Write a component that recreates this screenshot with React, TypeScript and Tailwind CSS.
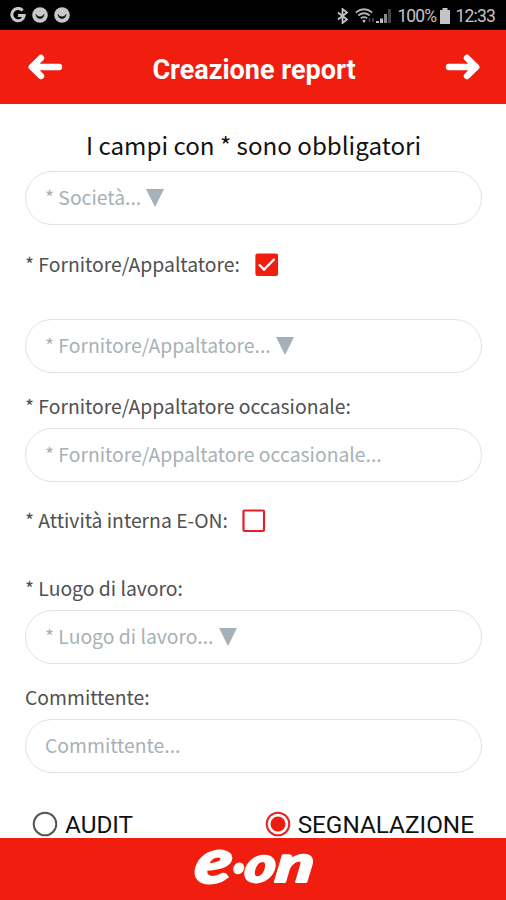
import type { ReactNode } from "react";

interface FieldProps {
  placeholder: string;
  isSelect?: boolean;
}

function Field({ placeholder, isSelect = false }: FieldProps) {
  return (
    <div className="flex h-[54px] w-full shrink-0 items-center rounded-full border-[1.5px] border-[#e2e2e4] bg-white pb-px pl-[19px] text-[19.35px] leading-none text-[#a7b1b6]">
      <span className="whitespace-pre">{placeholder}</span>
      {isSelect && (
        <svg className="ml-[5px] h-[18px] w-[18px]" viewBox="0 0 18 18">
          <path d="M0 0h18L9 18z" fill="#a5b0b8" />
        </svg>
      )}
    </div>
  );
}

function Label({ children }: { children: ReactNode }) {
  return (
    <span className="text-[19.35px] leading-6 whitespace-pre text-[#505050]">
      {children}
    </span>
  );
}

function Checkbox({ checked = false }: { checked?: boolean }) {
  return (
    <svg className="mt-px h-[24px] w-[24px]" viewBox="0 0 24 24">
      <rect
        x="1.5"
        y="1.5"
        width="20.5"
        height="20.5"
        rx="1"
        fill={checked ? "#f11d0e" : "#fff"}
        stroke={checked ? "#f11d0e" : "#e3202a"}
        strokeWidth="2.2"
      />
      {checked && (
        <path d="M4 11.5l5 5L19.500 6" fill="none" stroke="#fff" strokeWidth="2.4" />
      )}
    </svg>
  );
}

function Radio({ label, selected = false }: { label: string; selected?: boolean }) {
  return (
    <div className="flex items-center gap-[7px]">
      <svg className="h-[26px] w-[26px]" viewBox="0 0 26 26">
        <circle
          cx="13"
          cy="13"
          r="11.3"
          fill="none"
          stroke={selected ? "#e52222" : "#555"}
          strokeWidth="2"
        />
        {selected && <circle cx="13" cy="13" r="7.5" fill="#ee1c10" />}
      </svg>
      <span className="pt-[2px] font-[Roboto,sans-serif] text-[24.3px] leading-[24px] text-[#111]">
        {label}
      </span>
    </div>
  );
}

function Arrow({ flip = false }: { flip?: boolean }) {
  return (
    <svg
      className={flip ? "h-[28px] w-[36px] -scale-x-100" : "h-[28px] w-[36px]"}
      viewBox="0 0 36 28"
      fill="none"
      stroke="#fff"
      strokeWidth="6.4"
      strokeLinecap="round"
      strokeLinejoin="round"
    >
      <path d="M32 14H6M14 5L4.800 14l9.200 9" />
    </svg>
  );
}

function Smiley() {
  return (
    <svg className="h-4 w-4" viewBox="0 0 16 16">
      <circle cx="8" cy="8" r="7.8" fill="#c8c8c8" />
      <path d="M4 7.500q.5 4 4 4t4-4q-1.500 2.500-4 2.500t-4-2.500z" fill="#111" stroke="#111" strokeWidth=".8" />
    </svg>
  );
}

function StatusBar() {
  return (
    <div className="flex h-[30px] shrink-0 items-center justify-between bg-black pr-[11px] pl-[10px] font-[Roboto,sans-serif] text-[#c4c4c4]">
      <div className="flex items-center gap-[6px]">
        <svg className="h-4 w-4" viewBox="0 0 16 16" fill="none" stroke="#c8c8c8" strokeWidth="3">
          <path d="M12.700 3.500A6.200 6.200 0 1 0 14.200 8.500H8" />
        </svg>
        <Smiley />
        <Smiley />
      </div>
      <div className="flex items-center pt-px">
        <svg className="h-4 w-[12px]" viewBox="0 0 12 16" fill="none" stroke="#c4c4c4" strokeWidth="1.800">
          <path d="M1 4.500l9 7-4.500 3.500V1L10 4.500l-9 7" />
        </svg>
        <svg className="ml-[6px] h-4 w-[20px]" viewBox="0 0 20 16" fill="none" stroke="#b5b5b5" strokeWidth="1.700">
          <path d="M.8 4.500Q9 -2 17.200 4.500M3.300 7.500Q9 3 14.700 7.500M5.800 10.300Q9 8 12.200 10.300" />
          <circle cx="9" cy="13" r="1.500" fill="#b5b5b5" stroke="none" />
          <path d="M14.500 10v4M18 10v4" stroke="#444" />
        </svg>
        <svg className="ml-[1px] h-4 w-[16px]" viewBox="0 0 16 16">
          <path d="M0 13h3v2H0zM4 10.500h3V15H4z" fill="#bbb" />
          <path d="M8 6h3v9H8z" fill="#8a8a8a" />
          <path d="M12 1h3v14h-3z" fill="#444" />
        </svg>
        <span className="ml-[5px] w-[38px] pt-[2px] text-[17.500px] leading-none tracking-[-0.900px] whitespace-nowrap">
          100%
        </span>
        <svg className="ml-[4px] h-4 w-[12px]" viewBox="0 0 12 16">
          <path d="M3.500 0h5v2H11v14H1V2h2.500z" fill="#c4c4c4" />
        </svg>
        <span className="ml-[4px] pt-[2px] text-[17.500px] leading-none tracking-[-0.800px]">12:33</span>
      </div>
    </div>
  );
}

function Logo() {
  return (
    <svg
      className="h-[44px] w-[126px] overflow-visible"
      viewBox="0 0 126 44"
      fill="#fff"
      stroke="#fff"
      strokeWidth="2"
      strokeLinejoin="round"
      fontFamily="Lato, sans-serif"
      fontWeight="900"
      fontStyle="italic"
    >
      <g transform="translate(5 0) skewX(-8)">
        <text x="3" y="36.500" fontSize="62" textLength="37" lengthAdjust="spacingAndGlyphs">e</text>
        <text x="41" y="36.500" fontSize="49" textLength="12" lengthAdjust="spacingAndGlyphs">·</text>
        <text x="53" y="36" fontSize="50" textLength="31" lengthAdjust="spacingAndGlyphs">o</text>
        <text x="84" y="36" fontSize="52" textLength="38" lengthAdjust="spacingAndGlyphs">n</text>
      </g>
    </svg>
  );
}

export default function App() {
  return (
    <div className="flex h-[900px] w-[506px] flex-col overflow-hidden bg-white font-['Noto_Sans_CJK_JP','Noto_Sans_CJK_SC',sans-serif]">
      <StatusBar />
      <header className="flex h-[74px] shrink-0 items-center justify-between bg-[#f11d0e] pr-[25px] pl-[27px]">
        <Arrow />
        <h1 className="pt-[6px] font-[Roboto,sans-serif] text-[27px] font-bold whitespace-nowrap text-white">
          Creazione report
        </h1>
        <Arrow flip />
      </header>

      <main className="flex min-h-0 flex-1 flex-col overflow-hidden pr-[24px] pl-[25px]">
        <h2 className="mt-[24px] h-[43px] shrink-0 text-center text-[24.15px] leading-[34px] whitespace-pre text-[#111]">
          I campi con * sono obbligatori
        </h2>
        <Field placeholder="* Società..." isSelect />
        <div className="flex h-[94px] shrink-0 items-start gap-[15px] pt-[27px]">
          <Label>* Fornitore/Appaltatore:</Label>
          <Checkbox checked />
        </div>
        <Field placeholder="* Fornitore/Appaltatore..." isSelect />
        <div className="flex h-[55px] shrink-0 items-start pt-[21px]">
          <Label>* Fornitore/Appaltatore occasionale:</Label>
        </div>
        <Field placeholder="* Fornitore/Appaltatore occasionale..." />
        <div className="flex h-[94px] shrink-0 items-start gap-[14px] pt-[26px]">
          <Label>* Attività interna E-ON:</Label>
          <Checkbox />
        </div>
        <div className="flex h-[34px] shrink-0 items-start">
          <Label>* Luogo di lavoro:</Label>
        </div>
        <Field placeholder="* Luogo di lavoro..." isSelect />
        <div className="flex h-[55px] shrink-0 items-start pt-[21px]">
          <Label>Committente:</Label>
        </div>
        <Field placeholder="Committente..." />
        <div className="flex shrink-0 justify-between pt-[38px] pr-[8px] pl-[7px]">
          <Radio label="AUDIT" />
          <Radio label="SEGNALAZIONE" selected />
        </div>
      </main>

      <footer className="flex h-[62px] shrink-0 justify-center bg-[#f11d0e] pt-[8px]">
        <Logo />
      </footer>
    </div>
  );
}
